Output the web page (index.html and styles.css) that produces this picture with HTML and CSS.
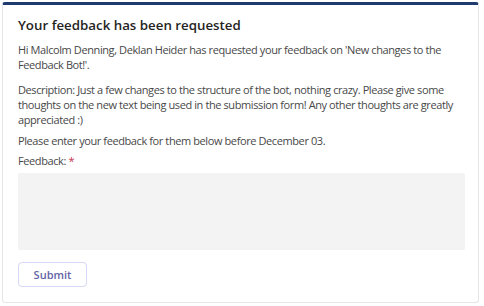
FILE: index.html
```html
<!DOCTYPE html>
<html>
<head>
<meta charset="utf-8">
<link rel="stylesheet" href="styles.css">
</head>
<body>
<div class="card">
  <h1 class="title">Your feedback has been requested</h1>
  <p class="text">Hi Malcolm Denning, Deklan Heider has requested your feedback on 'New changes to the Feedback Bot!'.</p>
  <p class="text desc">Description: Just a few changes to the structure of the bot, nothing crazy. Please give some thoughts on the new text being used in the submission form! Any other thoughts are greatly appreciated :)</p>
  <p class="text due">Please enter your feedback for them below before December 03.</p>
  <label class="label">Feedback: <span class="req">*</span></label>
  <div class="input"></div>
  <button class="submit">Submit</button>
</div>
</body>
</html>
```
FILE: styles.css
```css
html, body {
  margin: 0;
  padding: 0;
  background: #ffffff;
}
body {
  padding: 2px 5px 3px 2px;
  font-family: "Open Sans", "Segoe UI", sans-serif;
  color: #484848;
}
.card {
  box-sizing: border-box;
  height: 301px;
  border: 1px solid #e6e6e6;
  border-top: 3px solid #1f3b6e;
  border-radius: 3px;
  padding: 10px 13px 0 15px;
  display: flex;
  flex-direction: column;
}
.title {
  margin: 0;
  font-size: 13.3px;
  font-weight: 600;
  color: #252423;
  line-height: 20px;
}
.text {
  margin: 6.5px 0 0;
  font-size: 11px;
  line-height: 15px;
  letter-spacing: -0.4px;
}
.desc {
  margin-top: 10px;
}
.due {
  margin-top: 6px;
}
.label {
  margin-top: 5px;
  font-size: 11px;
  line-height: 15px;
  letter-spacing: -0.4px;
}
.req {
  color: #c4314b;
}
.input {
  margin-top: 5px;
  height: 77px;
  background: #f3f3f3;
  border-radius: 2px;
}
.submit {
  align-self: flex-start;
  margin-top: 12px;
  width: 69px;
  height: 25px;
  border: 1px solid #d6d6f7;
  border-radius: 4px;
  background: #fff;
  color: #6264a7;
  font-family: "Open Sans", sans-serif;
  font-size: 11px;
  font-weight: 600;
}
```
